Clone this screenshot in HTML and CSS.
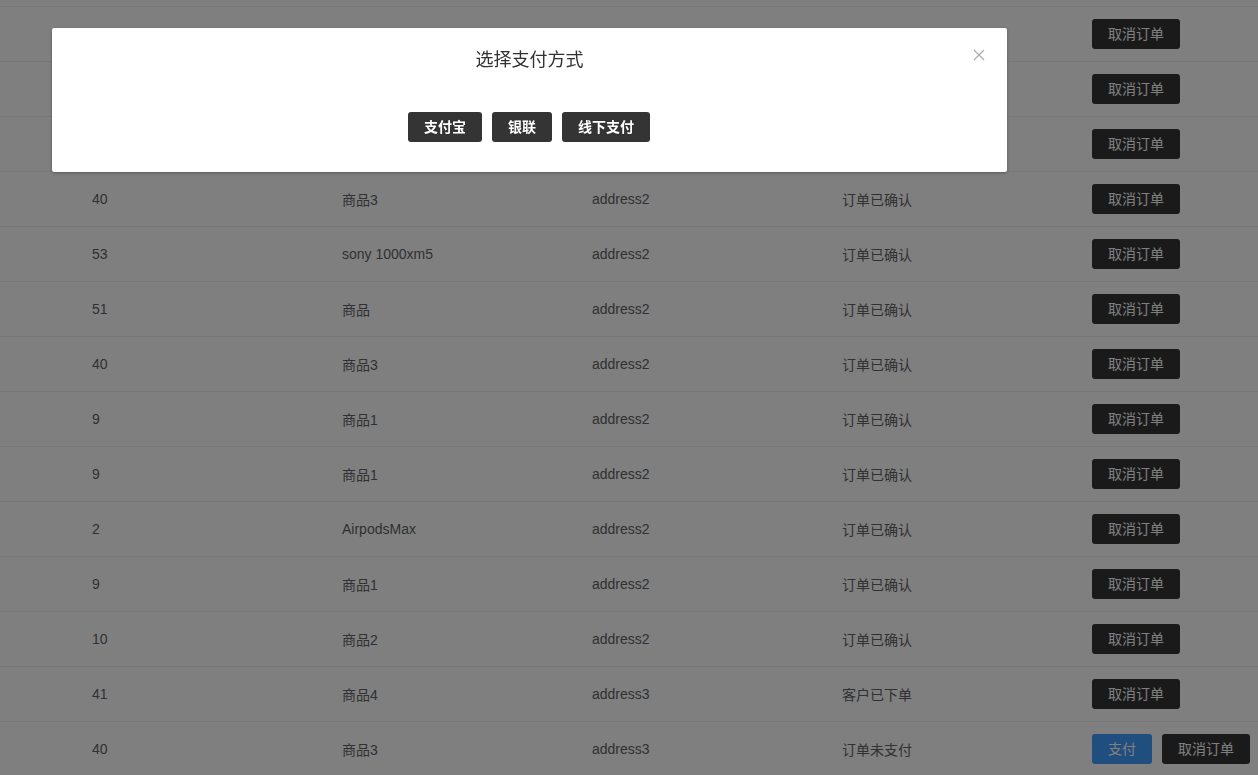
FILE: index.html
```html
<!DOCTYPE html>
<html lang="zh-CN">
<head>
<meta charset="utf-8">
<title>订单列表</title>
<link rel="stylesheet" href="styles.css">
</head>
<body>
<div class="table">
  <div class="row"><div class="cell">40</div><div class="cell">商品3</div><div class="cell">address2</div><div class="cell">订单已确认</div><div class="cell ops"><button class="btn dark">取消订单</button></div></div>
  <div class="row"><div class="cell">53</div><div class="cell">sony 1000xm5</div><div class="cell">address2</div><div class="cell">订单已确认</div><div class="cell ops"><button class="btn dark">取消订单</button></div></div>
  <div class="row"><div class="cell">9</div><div class="cell">商品1</div><div class="cell">address2</div><div class="cell">订单已确认</div><div class="cell ops"><button class="btn dark">取消订单</button></div></div>
  <div class="row"><div class="cell">40</div><div class="cell">商品3</div><div class="cell">address2</div><div class="cell">订单已确认</div><div class="cell ops"><button class="btn dark">取消订单</button></div></div>
  <div class="row"><div class="cell">53</div><div class="cell">sony 1000xm5</div><div class="cell">address2</div><div class="cell">订单已确认</div><div class="cell ops"><button class="btn dark">取消订单</button></div></div>
  <div class="row"><div class="cell">51</div><div class="cell">商品</div><div class="cell">address2</div><div class="cell">订单已确认</div><div class="cell ops"><button class="btn dark">取消订单</button></div></div>
  <div class="row"><div class="cell">40</div><div class="cell">商品3</div><div class="cell">address2</div><div class="cell">订单已确认</div><div class="cell ops"><button class="btn dark">取消订单</button></div></div>
  <div class="row"><div class="cell">9</div><div class="cell">商品1</div><div class="cell">address2</div><div class="cell">订单已确认</div><div class="cell ops"><button class="btn dark">取消订单</button></div></div>
  <div class="row"><div class="cell">9</div><div class="cell">商品1</div><div class="cell">address2</div><div class="cell">订单已确认</div><div class="cell ops"><button class="btn dark">取消订单</button></div></div>
  <div class="row"><div class="cell">2</div><div class="cell">AirpodsMax</div><div class="cell">address2</div><div class="cell">订单已确认</div><div class="cell ops"><button class="btn dark">取消订单</button></div></div>
  <div class="row"><div class="cell">9</div><div class="cell">商品1</div><div class="cell">address2</div><div class="cell">订单已确认</div><div class="cell ops"><button class="btn dark">取消订单</button></div></div>
  <div class="row"><div class="cell">10</div><div class="cell">商品2</div><div class="cell">address2</div><div class="cell">订单已确认</div><div class="cell ops"><button class="btn dark">取消订单</button></div></div>
  <div class="row"><div class="cell">41</div><div class="cell">商品4</div><div class="cell">address3</div><div class="cell">客户已下单</div><div class="cell ops"><button class="btn dark">取消订单</button></div></div>
  <div class="row"><div class="cell">40</div><div class="cell">商品3</div><div class="cell">address3</div><div class="cell">订单未支付</div><div class="cell ops"><button class="btn blue">支付</button><button class="btn dark">取消订单</button></div></div>
</div>

<div class="mask"></div>
<div class="dialog">
  <div class="dialog-header">
    <span class="dialog-title">选择支付方式</span>
    <button class="dialog-close" aria-label="关闭">
      <svg width="12" height="12" viewBox="0 0 12 12"><path d="M1 1L11 11M11 1L1 11" stroke="#a8abb2" stroke-width="1.2" fill="none"/></svg>
    </button>
  </div>
  <div class="dialog-body">
    <button class="btn dark bold">支付宝</button>
    <button class="btn dark bold">银联</button>
    <button class="btn dark bold">线下支付</button>
  </div>
</div>
</body>
</html>
```

FILE: styles.css
```css
html, body {
  margin: 0;
  padding: 0;
  background: #fff;
  font-family: "Liberation Sans", Arial, "Noto Sans CJK SC", sans-serif;
  font-size: 14px;
  color: #606266;
}

body {
  padding-top: 6px;
}

.table {
  width: 100%;
  border-top: 1px solid #ebeef5;
}

.row {
  display: grid;
  grid-template-columns: 250px 250px 250px 250px 1fr;
  padding-left: 92px;
  height: 54px;
  border-bottom: 1px solid #ebeef5;
  align-items: center;
}

.cell {
  white-space: nowrap;
}

.ops {
  display: flex;
  gap: 10px;
}

.btn {
  height: 30px;
  padding: 0 16px;
  border: none;
  border-radius: 3px;
  font-family: inherit;
  font-size: 14px;
  line-height: 30px;
  color: #fff;
  cursor: pointer;
}

.btn.dark {
  background: #343434;
}

.btn.blue {
  background: #409eff;
}

.btn.bold {
  font-weight: bold;
}

.mask {
  position: fixed;
  inset: 0;
  background: rgba(0, 0, 0, 0.5);
}

.dialog {
  position: fixed;
  left: 52px;
  top: 28px;
  width: 955px;
  background: #fff;
  border-radius: 2px;
  box-shadow: 0 1px 3px rgba(0, 0, 0, 0.3);
  padding-bottom: 30px;
}

.dialog-header {
  position: relative;
  padding: 20px 20px 0;
  text-align: center;
  line-height: 24px;
}

.dialog-title {
  font-size: 18px;
  color: #303133;
}

.dialog-close {
  position: absolute;
  right: 22px;
  top: 21px;
  width: 12px;
  height: 12px;
  padding: 0;
  border: none;
  background: none;
  display: flex;
}

.dialog-body {
  display: flex;
  justify-content: center;
  gap: 10px;
  padding-top: 39px;
  padding-right: 1px;
}
```
